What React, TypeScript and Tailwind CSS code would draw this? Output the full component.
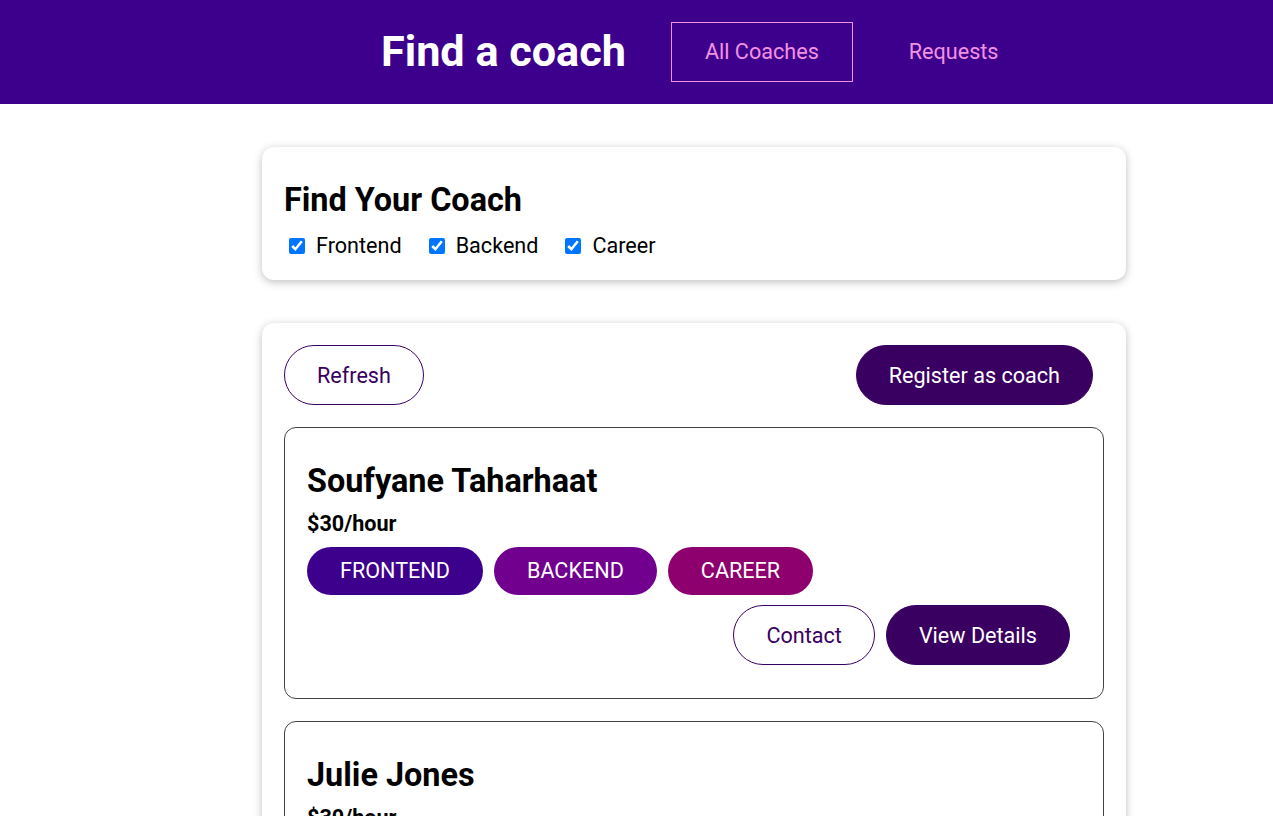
import type { ReactNode } from "react";

type Coach = {
  id: string;
  name: string;
  rate: number;
  areas: string[];
};

const coaches: Coach[] = [
  { id: "c1", name: "Soufyane Taharhaat", rate: 30, areas: ["frontend", "backend", "career"] },
  { id: "c2", name: "Julie Jones", rate: 30, areas: ["frontend", "career"] },
];

function getBadgeClass(area: string) {
  if (area === "frontend") {
    return "bg-[#3d008d]";
  }

  if (area === "backend") {
    return "bg-[#71008f]";
  }

  return "bg-[#8d006e]";
}

function BaseCard({ children }: { children: ReactNode }) {
  return (
    <section className="my-[43px] rounded-[12px] bg-white p-[22px] shadow-[0_2px_8px_rgba(0,0,0,0.26)]">
      {children}
    </section>
  );
}

function BaseButton({ children, outline = false }: { children: ReactNode; outline?: boolean }) {
  return (
    <button
      type="button"
      className={
        outline
          ? "mr-[11px] rounded-[30px] border border-[#3a0061] bg-transparent px-[32px] pt-[17px] pb-[15px] leading-[26px] text-[#3a0061]"
          : "mr-[11px] rounded-[30px] border border-[#3a0061] bg-[#3a0061] px-[32px] pt-[17px] pb-[15px] leading-[26px] text-white"
      }
    >
      {children}
    </button>
  );
}

function CoachItem({ coach }: { coach: Coach }) {
  return (
    <li className="my-[22px] rounded-[12px] border border-[#424242] p-[22px]">
      <h3 className="mt-[12px] mb-[11px] text-[32.4px] leading-[39px] font-bold">{coach.name}</h3>
      <h4 className="my-[11px] text-[21.6px] leading-[24px] font-bold">${coach.rate}/hour</h4>
      <div className="flex">
        {coach.areas.map((area) => (
          <span
            key={area}
            className={`mr-[11px] inline-block rounded-[30px] px-[33px] py-[11px] leading-[26px] text-white uppercase ${getBadgeClass(area)}`}
          >
            {area}
          </span>
        ))}
      </div>
      <div className="mt-[10px] mb-[11px] flex justify-end">
        <BaseButton outline>Contact</BaseButton>
        <BaseButton>View Details</BaseButton>
      </div>
    </li>
  );
}

export default function App() {
  const filters = ["Frontend", "Backend", "Career"];

  return (
    <div className="min-h-screen overflow-hidden bg-white text-[21.6px] text-black [font-family:Roboto,'Liberation_Sans',sans-serif]">
      <header className="flex h-[104px] items-center bg-[#3d008d]">
        <div className="ml-[381px] flex items-center">
          <h1 className="m-0 text-[43.2px] leading-[52px] font-bold text-white">Find a coach</h1>
          <ul className="ml-[34px] flex items-center">
            <li className="mx-[11px]">
              <a className="inline-block border border-[#f391e3] px-[33px] py-[16px] leading-[26px] text-[#f391e3]">
                All Coaches
              </a>
            </li>
            <li className="mx-[11px]">
              <a className="inline-block border border-transparent px-[33px] py-[16px] leading-[26px] text-[#f391e3]">
                Requests
              </a>
            </li>
          </ul>
        </div>
      </header>

      <main className="ml-[262px] w-[864px]">
        <BaseCard>
          <h2 className="mt-[12px] mb-[14px] text-[32.4px] leading-[39px] font-bold">Find Your Coach</h2>
          <div className="flex items-center leading-[24px]">
            {filters.map((filter) => (
              <span key={filter} className="mr-[22px] inline-flex items-center">
                <input
                  type="checkbox"
                  defaultChecked
                  className="ml-[5px] h-4 w-4 accent-[#0075ff]"
                />
                <label className="ml-[11px]">{filter}</label>
              </span>
            ))}
          </div>
        </BaseCard>

        <BaseCard>
          <div className="flex justify-between">
            <BaseButton outline>Refresh</BaseButton>
            <BaseButton>Register as coach</BaseButton>
          </div>
          <ul>
            {coaches.map((coach) => (
              <CoachItem key={coach.id} coach={coach} />
            ))}
          </ul>
        </BaseCard>
      </main>
    </div>
  );
}
